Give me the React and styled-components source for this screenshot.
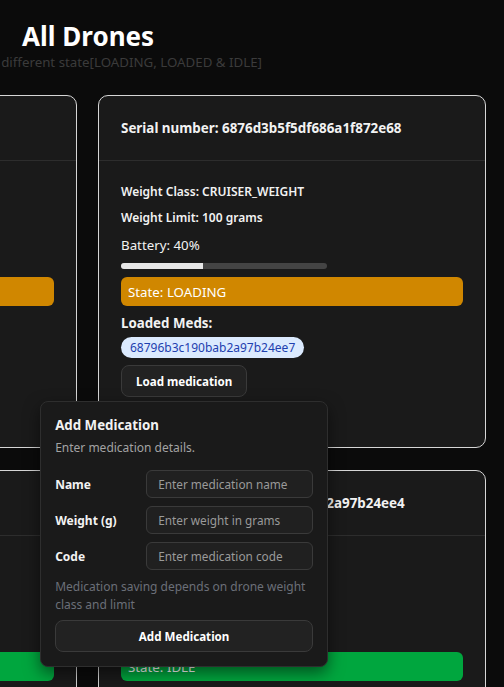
import React from "react";
import styled, { createGlobalStyle } from "styled-components";

const Global = createGlobalStyle`
  html, body { margin: 0; padding: 0; background: #0b0b0b; }
  body { font-family: "Segoe UI", "Noto Sans", "Open Sans", sans-serif; color: #f5f5f5; overflow: hidden; }
  * { box-sizing: border-box; }
`;

const Page = styled.div`
  width: 504px;
  height: 687px;
  overflow: hidden;
  padding-top: 20px;
`;

const Header = styled.header`
  padding-left: 22px;
`;

const Title = styled.h1`
  margin: 0;
  font-size: 26px;
  line-height: 32px;
  font-weight: 700;
  color: #ffffff;
`;

const SubtitleClip = styled.div`
  width: 262px;
  margin-left: -22px;
  display: flex;
  justify-content: flex-end;
`;

const Subtitle = styled.p`
  margin: 0;
  flex: none;
  white-space: nowrap;
  font-size: 13.3px;
  line-height: 20px;
  color: #3b3b3b;
`;

const Grid = styled.div`
  margin-top: 23px;
  display: grid;
  grid-template-columns: repeat(2, 388px);
  justify-content: end;
  column-gap: 21px;
  row-gap: 22px;
  padding-right: 18px;
`;

const Card = styled.section`
  background: #1a1a1a;
  border: 1px solid #d6d6d6;
  border-radius: 10px;
  display: flex;
  flex-direction: column;
`;

const CardHeader = styled.div`
  padding: 22px;
  border-bottom: 1px solid #2d2d2d;
  font-size: 13.4px;
  line-height: 20px;
  font-weight: 700;
  color: #f2f2f2;
  white-space: nowrap;
`;

const CardBody = styled.div`
  padding: 22px 22px 50px;
  display: flex;
  flex-direction: column;
  gap: 8px;
`;

const Info = styled.div`
  font-size: 12px;
  line-height: 18px;
  font-weight: 600;
  color: #f2f2f2;
`;

const Battery = styled.div`
  font-size: 13.3px;
  line-height: 20px;
  color: #f2f2f2;
`;

const Track = styled.div`
  width: 206px;
  height: 6px;
  border-radius: 3px;
  background: #444444;
  overflow: hidden;
`;

const Fill = styled.div`
  height: 100%;
  background: #e6e6e6;
`;

const StateBar = styled.div`
  height: 29px;
  border-radius: 6px;
  padding: 0 7px;
  display: flex;
  align-items: center;
  font-size: 13.3px;
  color: #ffffff;
  background: ${(p) => (p.$state === "IDLE" ? "#00a63e" : "#d08700")};
`;

const MedsSection = styled.div`
  display: flex;
  flex-direction: column;
  align-items: flex-start;
  gap: 5px;
`;

const MedsLabel = styled.div`
  font-size: 13.3px;
  line-height: 18px;
  font-weight: 700;
  color: #f2f2f2;
`;

const Chip = styled.span`
  height: 21px;
  padding: 0 9px;
  border-radius: 999px;
  background: #dbeafe;
  color: #1e40af;
  font-size: 12px;
  display: inline-flex;
  align-items: center;
`;

const Anchor = styled.div`
  position: relative;
  align-self: flex-start;
  margin-top: -1px;
`;

const Button = styled.button`
  font-family: inherit;
  height: 32px;
  padding: 0 14px;
  border-radius: 8px;
  border: 1px solid #3a3a3a;
  background: #222222;
  color: #ffffff;
  font-size: 11.6px;
  font-weight: 700;
  width: ${(p) => (p.$full ? "100%" : "auto")};
`;

const Popover = styled.div`
  position: absolute;
  top: calc(100% + 4px);
  left: 50%;
  transform: translateX(-50%);
  width: 288px;
  background: #1a1a1a;
  border: 1px solid #2e2e2e;
  border-radius: 8px;
  box-shadow: 0 6px 16px rgba(0, 0, 0, 0.5);
  padding: 13px 14px 14px 14px;
  z-index: 5;
`;

const PopTitle = styled.h3`
  margin: 0;
  font-size: 13.3px;
  line-height: 20px;
  font-weight: 700;
  color: #f2f2f2;
`;

const PopDesc = styled.p`
  margin: 4px 0 0;
  font-size: 12px;
  line-height: 18px;
  color: #a3a3a3;
`;

const Form = styled.div`
  margin-top: 13px;
  display: grid;
  grid-template-columns: 79px 1fr;
  column-gap: 12px;
  row-gap: 8px;
  align-items: center;
`;

const Label = styled.label`
  font-size: 12px;
  font-weight: 700;
  color: #f2f2f2;
`;

const Input = styled.input`
  height: 28px;
  width: 100%;
  border-radius: 6px;
  border: 1px solid #3a3a3a;
  background: #202020;
  padding: 0 11px;
  font-family: inherit;
  font-size: 11.8px;
  color: #f2f2f2;
  &::placeholder { color: #9a9a9a; }
`;

const Hint = styled.p`
  margin: 8px 0 6px;
  font-size: 12px;
  line-height: 18px;
  color: #6b6f78;
`;

function DroneCard({ serial, weightClass, limit, battery, state, meds, withPopover }) {
  return (
    <Card>
      <CardHeader>Serial number: {serial}</CardHeader>
      <CardBody>
        <Info>Weight Class: {weightClass}</Info>
        <Info>Weight Limit: {limit} grams</Info>
        <Battery>Battery: {battery}%</Battery>
        <Track>
          <Fill style={{ width: `${battery}%` }} />
        </Track>
        <StateBar $state={state}>State: {state}</StateBar>
        {meds && (
          <MedsSection>
            <MedsLabel>Loaded Meds:</MedsLabel>
            {meds.map((m) => (
              <Chip key={m}>{m}</Chip>
            ))}
          </MedsSection>
        )}
        {meds && (
          <Anchor>
            <Button>Load medication</Button>
            {withPopover && (
              <Popover>
                <PopTitle>Add Medication</PopTitle>
                <PopDesc>Enter medication details.</PopDesc>
                <Form>
                  <Label>Name</Label>
                  <Input placeholder="Enter medication name" />
                  <Label>Weight (g)</Label>
                  <Input placeholder="Enter weight in grams" />
                  <Label>Code</Label>
                  <Input placeholder="Enter medication code" />
                </Form>
                <Hint>Medication saving depends on drone weight class and limit</Hint>
                <Button $full>Add Medication</Button>
              </Popover>
            )}
          </Anchor>
        )}
      </CardBody>
    </Card>
  );
}

export default function App() {
  return (
    <>
      <Global />
      <Page>
        <Header>
          <Title>All Drones</Title>
          <SubtitleClip>
            <Subtitle>View all drones in different state[LOADING, LOADED &amp; IDLE]</Subtitle>
          </SubtitleClip>
        </Header>
        <Grid>
          <DroneCard
            serial="6876d3b5f5df1f6a1f872e1f"
            weightClass="LIGHT_WEIGHT"
            limit={50}
            battery={80}
            state="LOADING"
            meds={["68796b3c190bab2a97b24ee1"]}
          />
          <DroneCard
            serial="6876d3b5f5df686a1f872e68"
            weightClass="CRUISER_WEIGHT"
            limit={100}
            battery={40}
            state="LOADING"
            meds={["68796b3c190bab2a97b24ee7"]}
            withPopover
          />
          <DroneCard
            serial="6876d3b5f5df1f6a1f872e1f"
            weightClass="MIDDLE_WEIGHT"
            limit={75}
            battery={100}
            state="IDLE"
          />
          <DroneCard
            serial="6879fb3c1f0bab2a97b24ee4"
            weightClass="HEAVY_WEIGHT"
            limit={500}
            battery={100}
            state="IDLE"
          />
        </Grid>
      </Page>
    </>
  );
}
